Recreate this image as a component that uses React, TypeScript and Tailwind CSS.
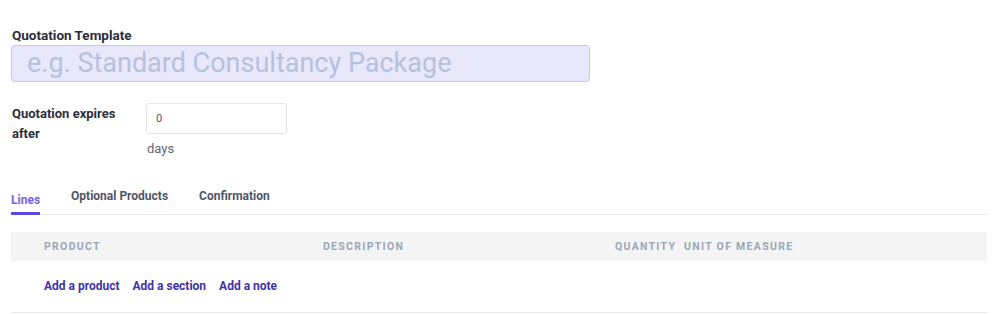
import React from "react";

export default function App() {
  return (
    <div className="w-[999px] h-[314px] bg-white overflow-hidden font-['Roboto',sans-serif]">
      <div className="pl-[11px] pr-[12px] pt-[27px]">
        <div className="text-[13.5px] font-bold leading-[16px] text-[#2d2d3a] pl-[1px]">Quotation Template</div>
        <div className="mt-[2px] w-[579px] h-[37px] rounded-[4px] border border-[#c9c5f3] bg-[#e9e7fa] flex items-center pl-[15px]">
          <span className="text-[27px] leading-none text-[#b5c2df]">e.g. Standard Consultancy Package</span>
        </div>

        <div className="mt-[21px] flex">
          <div className="w-[135px] pl-[1px] pt-[1px] text-[13px] font-bold leading-[20px] text-[#2d2d3a]">
            Quotation expires<br />after
          </div>
          <div className="flex flex-col">
            <div className="w-[141px] h-[31px] rounded-[3px] border border-[#e1e4ea] bg-white flex items-center pl-[9px]">
              <span className="text-[11px] text-[#555a66] pt-[1px]">0</span>
            </div>
            <div className="mt-[7px] pl-[1px] text-[13px] leading-[16px] text-[#5f6673]">days</div>
          </div>
        </div>

        <div className="mt-[29px] pt-[1px] flex border-b border-[#e6e8ef] h-[29px]">
          <div className="relative h-full">
            <span className="text-[12px] font-bold text-[#7163e6] leading-[18px]">Lines</span>
            <div className="absolute left-0 right-0 bottom-[-1px] h-[3px] bg-[#5a4ae3]" />
          </div>
          <div className="ml-[31px] text-[12px] font-bold text-[#4f5666] leading-[18px]">Optional Products</div>
          <div className="ml-[31px] text-[12px] font-bold text-[#4f5666] leading-[18px]">Confirmation</div>
        </div>

        <div className="mt-[17px] h-[29px] bg-[#f4f4f4] flex items-center text-[10.5px] font-bold tracking-[1.3px] text-[#9ba6b8]">
          <div className="w-[312px] pl-[33px]">PRODUCT</div>
          <div className="w-[292px]">DESCRIPTION</div>
          <div className="w-[69px]">QUANTITY</div>
          <div>UNIT OF MEASURE</div>
        </div>

        <div className="h-[52px] pb-[2px] border-b border-[#e6e8ef] flex items-center pl-[33px] gap-[13px] text-[12px] font-bold text-[#3f33a8]">
          <span>Add a product</span>
          <span>Add a section</span>
          <span>Add a note</span>
        </div>
      </div>
    </div>
  );
}
